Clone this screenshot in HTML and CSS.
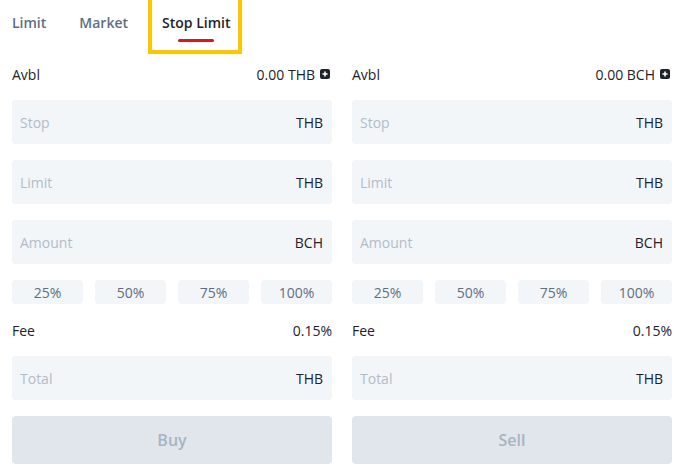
FILE: index.html
```html
<!DOCTYPE html>
<html lang="en">
<head>
  <meta charset="UTF-8" />
  <meta name="viewport" content="width=device-width, initial-scale=1.0" />
  <title>Spot Order | Stop Limit</title>
  <link rel="stylesheet" href="styles.css">
</head>
<body>

  <nav class="order-tabs">
    <span class="tab">Limit</span>
    <span class="tab">Market</span>
    <span class="tab active">Stop Limit</span>
  </nav>

  <div class="order-forms">
    <!-- Buy side -->
    <form class="order-form">
      <div class="info-row">
        <span>Avbl</span>
        <span class="balance">0.00 THB
          <svg class="add-icon" viewBox="0 0 10 10"><rect width="10" height="10" rx="2" fill="#1e2329"/><path d="M5 2.4v5.2M2.4 5h5.2" stroke="#fff" stroke-width="1.6"/></svg>
        </span>
      </div>
      <label class="field"><span class="placeholder">Stop</span><span class="unit">THB</span></label>
      <label class="field"><span class="placeholder">Limit</span><span class="unit">THB</span></label>
      <label class="field"><span class="placeholder">Amount</span><span class="unit">BCH</span></label>
      <div class="percent-list">
        <button type="button" class="percent">25%</button>
        <button type="button" class="percent">50%</button>
        <button type="button" class="percent">75%</button>
        <button type="button" class="percent">100%</button>
      </div>
      <div class="info-row">
        <span>Fee</span>
        <span>0.15%</span>
      </div>
      <label class="field"><span class="placeholder">Total</span><span class="unit">THB</span></label>
      <button type="button" class="submit" disabled>Buy</button>
    </form>

    <!-- Sell side -->
    <form class="order-form">
      <div class="info-row">
        <span>Avbl</span>
        <span class="balance">0.00 BCH
          <svg class="add-icon" viewBox="0 0 10 10"><rect width="10" height="10" rx="2" fill="#1e2329"/><path d="M5 2.4v5.2M2.4 5h5.2" stroke="#fff" stroke-width="1.6"/></svg>
        </span>
      </div>
      <label class="field"><span class="placeholder">Stop</span><span class="unit">THB</span></label>
      <label class="field"><span class="placeholder">Limit</span><span class="unit">THB</span></label>
      <label class="field"><span class="placeholder">Amount</span><span class="unit">BCH</span></label>
      <div class="percent-list">
        <button type="button" class="percent">25%</button>
        <button type="button" class="percent">50%</button>
        <button type="button" class="percent">75%</button>
        <button type="button" class="percent">100%</button>
      </div>
      <div class="info-row">
        <span>Fee</span>
        <span>0.15%</span>
      </div>
      <label class="field"><span class="placeholder">Total</span><span class="unit">THB</span></label>
      <button type="button" class="submit" disabled>Sell</button>
    </form>
  </div>

</body>
</html>
```

FILE: styles.css
```css
/* Page */
body {
  margin: 0;
  padding: 0 10px 0 12px;
  font-family: "Open Sans", "Noto Sans", Arial, sans-serif;
  font-size: 14px;
  color: #1e2329;
  background-color: #fff;
}

/* Order type tabs */
.order-tabs {
  display: flex;
  align-items: center;
  gap: 33px;
  height: 44px;
  padding-bottom: 20px;
}

.tab {
  font-size: 14px;
  font-weight: 600;
  color: #5e6e82;
  cursor: pointer;
}

.tab.active {
  position: relative;
  margin-left: 1px;
  color: #1e2329;
}

/* red bar under the selected tab */
.tab.active::after {
  content: "";
  position: absolute;
  left: 16px;
  top: 26px;
  width: 36px;
  height: 3px;
  border-radius: 2px;
  background-color: #e3131b;
}

/* highlight frame around the selected tab */
.tab.active::before {
  content: "";
  position: absolute;
  left: -14px;
  right: -12px;
  top: -17px;
  bottom: -22px;
  border: 4px solid #fdc700;
}

/* Buy / sell columns */
.order-forms {
  display: grid;
  grid-template-columns: 320px 320px;
  gap: 20px;
}

.order-form {
  display: flex;
  flex-direction: column;
  gap: 16px;
}

.info-row {
  display: flex;
  justify-content: space-between;
  align-items: center;
  height: 20px;
  font-size: 14px;
  color: #1e2329;
}

.balance {
  display: flex;
  align-items: center;
  gap: 5px;
}

.add-icon {
  width: 10px;
  height: 10px;
  margin-right: 2px;
}

/* Input boxes */
.field {
  display: flex;
  justify-content: space-between;
  align-items: center;
  height: 44px;
  padding: 0 9px 0 8px;
  border-radius: 4px;
  background-color: #f3f6f9;
  font-size: 14px;
}

.placeholder {
  color: #b2bcc7;
}

.unit {
  color: #1e2329;
}

/* Quick amount buttons */
.percent-list {
  display: grid;
  grid-template-columns: repeat(4, 1fr);
  gap: 12px;
}

.percent {
  height: 24px;
  border: none;
  border-radius: 4px;
  background-color: #f3f6f9;
  font-family: inherit;
  font-size: 14px;
  color: #5e6e82;
  cursor: pointer;
}

.submit {
  height: 48px;
  border: none;
  border-radius: 4px;
  background-color: #e0e6ec;
  font-family: inherit;
  font-size: 16px;
  font-weight: 600;
  color: #a8b4c0;
}
```
